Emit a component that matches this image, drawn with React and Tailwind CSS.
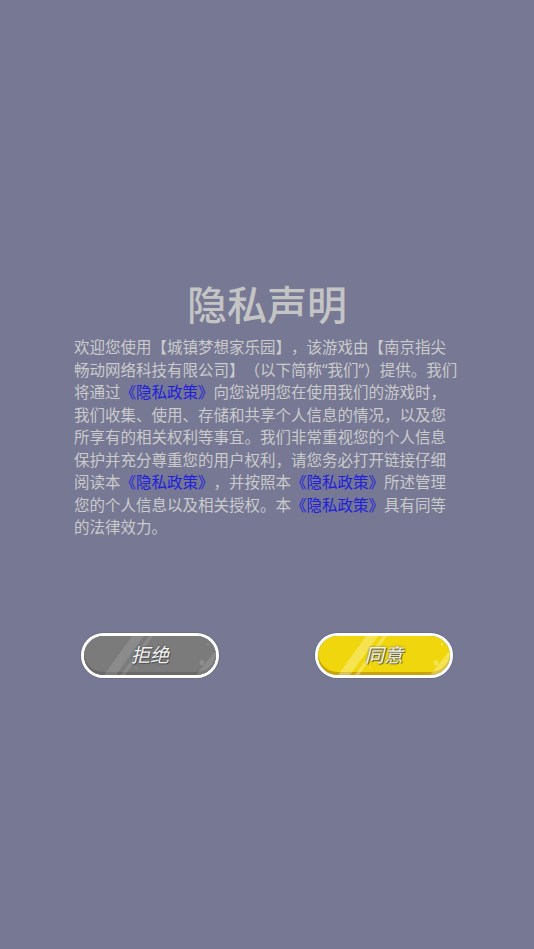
import React from 'react';

const LINK = '《隐私政策》';

const Stripes = ({ color }) => (
    <svg className="absolute inset-0 h-full w-full" viewBox="0 0 132 38" preserveAspectRatio="none">
        <polygon points="20,38 32,38 60,0 48,0" fill={color} />
        <polygon points="37,38 41,38 69,0 65,0" fill={color} />
        <polygon points="112,38 132,38 132,14" fill={color} />
        <circle cx="118" cy="26" r="2.5" fill={color} />
        <circle cx="124" cy="8" r="1.2" fill={color} />
        <circle cx="52" cy="31" r="1" fill={color} />
    </svg>
);

const GameButton = ({ label, fill, rim, stripe }) => (
    <button className="rounded-full border-[3px] border-white p-0 shadow-[0_0_0_1px_rgba(0,0,0,0.08)]">
        <div className={`relative flex h-[39px] w-[132px] items-center justify-center overflow-hidden rounded-full ${fill} ${rim}`}>
            <Stripes color={stripe} />
            <span
                className="relative text-[19px] italic text-[#f4f4f4]"
                style={{ textShadow: '0 0 2px rgba(60,60,60,0.9), 1px 1px 0 rgba(70,70,70,0.7)' }}
            >
                {label}
            </span>
        </div>
    </button>
);

const App = () => {
    return (
        <div
            className="flex min-h-[949px] w-full flex-col items-center bg-[#767894] [text-spacing-trim:space-all]"
            style={{ fontFamily: '"Noto Sans", "Noto Sans CJK SC", sans-serif' }}
        >
            {/* Title */}
            <h1 className="mt-[276px] text-[40px] font-medium leading-[58px] text-[#c4c4c4]">隐私声明</h1>

            {/* Body */}
            <p className="mt-[2px] w-[386px] text-[15.5px] leading-[22.5px] text-[#cbcbcb]">
                欢迎您使用【城镇梦想家乐园】，该游戏由【南京指尖畅动网络科技有限公司】（以下简称“我们”）提供。我们将通过
                <span className="text-[#2020dc]">{LINK}</span>
                向您说明您在使用我们的游戏时，我们收集、使用、存储和共享个人信息的情况，以及您所享有的相关权利等事宜。我们非常重视您的个人信息保护并充分尊重您的用户权利，请您务必打开链接仔细阅读本
                <span className="text-[#2020dc]">{LINK}</span>
                ，并按照本
                <span className="text-[#2020dc]">{LINK}</span>
                所述管理您的个人信息以及相关授权。本
                <span className="text-[#2020dc]">{LINK}</span>
                具有同等的法律效力。
            </p>

            {/* Actions */}
            <div className="mt-[94px] flex gap-[96px]">
                <GameButton label="拒绝" fill="bg-[#7b7b7b]" rim="shadow-[inset_0_-3px_0_#6a6a6a]" stripe="rgba(255,255,255,0.12)" />
                <GameButton label="同意" fill="bg-[#f0d60c]" rim="shadow-[inset_0_-3px_0_#c9a30a]" stripe="rgba(255,255,210,0.35)" />
            </div>
        </div>
    );
};

export default App;
